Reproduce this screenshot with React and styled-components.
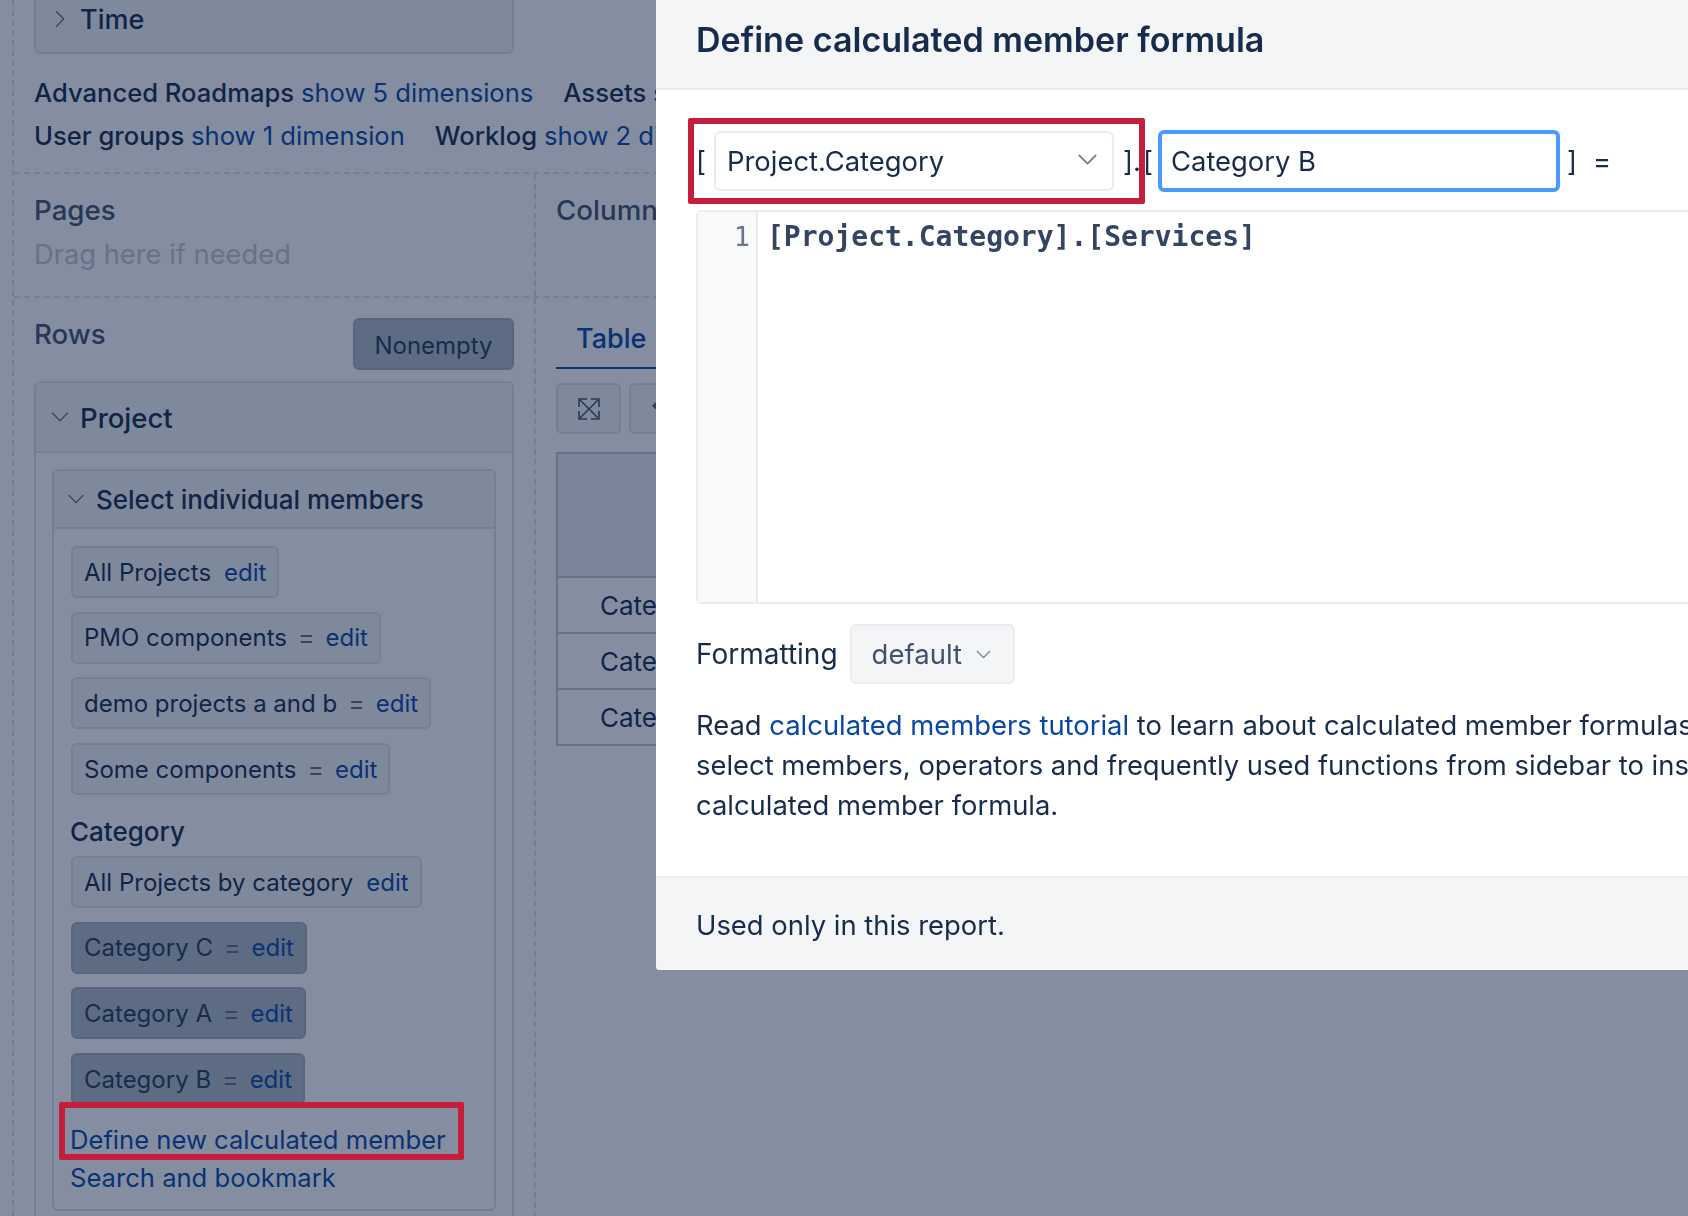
import React from "react";
import styled, { createGlobalStyle } from "styled-components";
import { ChevronDown, ChevronRight, Undo2 } from "lucide-react";

const GlobalStyle = createGlobalStyle`
    html, body {
        margin: 0;
        padding: 0;
        overflow: hidden;
        background: #fff;
    }
    * {
        box-sizing: border-box;
    }
`;

const Page = styled.div`
    position: relative;
    width: 1688px;
    height: 1216px;
    overflow: hidden;
    padding-left: 12px;
    font-family: Inter, "Liberation Sans", sans-serif;
    color: #172b4d;
`;

const Board = styled.div`
    border-left: 2px dashed #dfe1e6;
    height: 100%;
`;

const Link = styled.a`
    color: #0747a6;
    text-decoration: none;
`;

const TopSection = styled.section`
    height: 174px;
    padding-left: 20px;
    border-bottom: 2px dashed #dfe1e6;
`;

const TimeBox = styled.div`
    width: 480px;
    height: 54px;
    display: flex;
    align-items: flex-start;
    gap: 5px;
    padding: 3px 0 0 9px;
    background: #f4f5f7;
    border: 2px solid #dfe1e6;
    border-top: none;
    border-radius: 0 0 6px 6px;
    font-size: 27px;
    font-weight: 500;
    line-height: 34px;
    svg {
        margin-top: 1px;
        color: #6b778c;
    }
`;

const DimensionLines = styled.div`
    margin-top: 17px;
    font-size: 25.6px;
    line-height: 43px;
    font-weight: 500;
    white-space: nowrap;
`;

const DimensionName = styled.span`
    margin-right: 30px;
    ${Link} {
        font-weight: 400;
    }
`;

const Columns = styled.div`
    display: grid;
    grid-template-columns: 522px 1fr;
    height: ${(p) => p.$height}px;
    border-bottom: ${(p) => (p.$last ? "none" : "2px dashed #dfe1e6")};
`;

const Cell = styled.div`
    padding: ${(p) => p.$top || 0}px 0 0 20px;
    border-right: ${(p) => (p.$divided ? "2px dashed #dfe1e6" : "none")};
    overflow: hidden;
`;

const SectionLabel = styled.div`
    margin-top: ${(p) => p.$top || 0}px;
    font-size: 27.7px;
    line-height: 36px;
    font-weight: 500;
    color: #42526e;
`;

const DropHint = styled.div`
    margin-top: 9px;
    font-size: 27.3px;
    line-height: 36px;
    color: #c1c7d0;
`;

const RowsHead = styled.div`
    display: flex;
    justify-content: space-between;
    align-items: flex-start;
    width: 480px;
    height: 61px;
`;

const NonemptyButton = styled.div`
    width: 161px;
    height: 52px;
    margin-top: 20px;
    display: flex;
    align-items: center;
    justify-content: center;
    padding-top: 3px;
    background: #b3bac5;
    border: 2px solid #a5adba;
    border-radius: 6px;
    font-size: 24px;
    color: #253858;
`;

const Panel = styled.div`
    border: 2px solid #dfe1e6;
    border-radius: 6px;
    width: ${(p) => p.$width}px;
    margin-top: ${(p) => p.$top || 0}px;
`;

const PanelHead = styled.div`
    height: ${(p) => p.$height}px;
    display: flex;
    align-items: center;
    padding-left: ${(p) => p.$pad}px;
    gap: ${(p) => p.$gap}px;
    background: #f4f5f7;
    border-bottom: 2px solid #dfe1e6;
    font-size: ${(p) => p.$size}px;
    font-weight: 500;
    svg {
        color: #6b778c;
    }
`;

const HeadTitle = styled.span`
    padding-top: ${(p) => p.$nudge || 0}px;
`;

const PanelBody = styled.div`
    padding: 0 16px;
    height: ${(p) => p.$height}px;
`;

const MemberList = styled.div`
    display: flex;
    flex-direction: column;
    align-items: flex-start;
    gap: 13.7px;
    padding: ${(p) => p.$top}px 0 0 1px;
`;

const Chip = styled.div`
    height: 52px;
    display: flex;
    align-items: center;
    padding: 0 11px;
    gap: ${(p) => (p.$calc ? 11 : 13)}px;
    background: ${(p) => (p.$selected ? "#b3bac5" : "#f4f5f7")};
    border: 2px solid ${(p) => (p.$selected ? "#a5adba" : "#dfe1e6")};
    border-radius: 6px;
    font-size: 24px;
    white-space: nowrap;
    color: ${(p) => (p.$selected ? "#253858" : "#172b4d")};
`;

const Equals = styled.span`
    color: #5e6c84;
    font-size: 25px;
    line-height: 1;
`;

const GroupLabel = styled.div`
    margin-top: 21px;
    margin-bottom: 8px;
    font-size: 26px;
    line-height: 32px;
    font-weight: 500;
`;

const Actions = styled.div`
    display: flex;
    flex-direction: column;
    font-size: 25.6px;
    line-height: 38px;
    padding-top: 16px;
    white-space: nowrap;
`;

const RedFrame = styled.div`
    position: absolute;
    left: ${(p) => p.$left}px;
    top: ${(p) => p.$top}px;
    width: ${(p) => p.$width}px;
    height: ${(p) => p.$height}px;
    border: 6px solid #c41e3a;
    border-radius: 2px;
    pointer-events: none;
`;

const Tab = styled.div`
    width: 300px;
    height: 52px;
    margin-top: 19px;
    padding: 4px 0 0 20px;
    border-bottom: 2px solid #0747a6;
    color: #0747a6;
    font-size: 27px;
    font-weight: 500;
    line-height: 36px;
`;

const ToolRow = styled.div`
    display: flex;
    gap: 8px;
    margin-top: 14px;
`;

const ToolButton = styled.div`
    width: 65px;
    height: 51px;
    display: flex;
    align-items: center;
    justify-content: center;
    flex-shrink: 0;
    background: #f4f5f7;
    border: 2px solid #dfe1e6;
    border-radius: 6px;
    color: #42526e;
`;

const Pivot = styled.div`
    width: 300px;
    margin-top: 18px;
    border: 2px solid #c1c7d0;
    border-right: none;
`;

const PivotHead = styled.div`
    height: 122px;
    background: #ebecf0;
`;

const PivotRow = styled.div`
    height: 56px;
    padding-left: 42px;
    display: flex;
    align-items: center;
    border-top: 2px solid #c1c7d0;
    font-size: 26px;
`;

const Overlay = styled.div`
    position: fixed;
    inset: 0;
    background: rgba(9, 30, 66, 0.5);
`;

const Modal = styled.div`
    position: absolute;
    top: 0;
    left: 656px;
    width: 1300px;
    height: 970px;
    display: flex;
    flex-direction: column;
    background: #fff;
    border-radius: 0 0 0 4px;
    overflow: hidden;
    color: #172b4d;
`;

const ModalHeader = styled.header`
    height: 90px;
    flex-shrink: 0;
    display: flex;
    align-items: center;
    padding: 0 0 10px 40px;
    background: #f4f5f7;
    border-bottom: 2px solid #ebecf0;
    font-size: 34.1px;
    font-weight: 600;
`;

const ModalBody = styled.div`
    flex: 1;
    padding: 40px 0 0 40px;
`;

const FormulaRow = styled.div`
    position: relative;
    display: flex;
    align-items: center;
    height: 62px;
    font-size: 27.4px;
`;

const Bracket = styled.span`
    width: ${(p) => p.$width}px;
    padding-left: ${(p) => p.$pad || 0}px;
    flex-shrink: 0;
    color: #172b4d;
`;

const SelectBox = styled.div`
    width: 400px;
    height: 60px;
    margin-left: 1px;
    display: flex;
    align-items: center;
    justify-content: space-between;
    padding: 0 8px 0 11px;
    border: 2px solid #ebecf0;
    border-radius: 6px;
    svg {
        color: #6b778c;
        margin-top: -4px;
    }
`;

const NameInput = styled.div`
    width: 402px;
    height: 62px;
    margin-left: 1px;
    display: flex;
    align-items: center;
    padding-left: 9px;
    border: 4px solid #4c9aff;
    border-radius: 6px;
`;

const Editor = styled.div`
    display: flex;
    height: 394px;
    margin-top: 18px;
    border: 2px solid #ebecf0;
    border-right: none;
    border-radius: 6px 0 0 6px;
    font-family: "DejaVu Sans Mono", "Liberation Mono", monospace;
    font-size: 28px;
    line-height: 36px;
`;

const Gutter = styled.div`
    width: 60px;
    padding: 7px 6px 0 0;
    text-align: right;
    background: #f8f9fa;
    border-right: 2px solid #ebecf0;
    color: #6b778c;
    font-size: 27px;
`;

const Code = styled.div`
    padding: 7px 0 0 9px;
    font-weight: 700;
    color: #344563;
`;

const FormatRow = styled.div`
    display: flex;
    align-items: center;
    gap: 12px;
    margin-top: 20px;
    font-size: 28px;
`;

const FormatButton = styled.div`
    width: 165px;
    height: 60px;
    display: flex;
    align-items: center;
    gap: 9px;
    padding-left: 20px;
    background: #f4f5f7;
    border: 2px solid #ebecf0;
    border-radius: 6px;
    color: #42526e;
    font-size: 27.5px;
    svg {
        color: #6b778c;
    }
`;

const Help = styled.p`
    margin: 21px 0 0;
    font-size: 27.4px;
    line-height: 40px;
    white-space: nowrap;
`;

const ModalFooter = styled.footer`
    height: 94px;
    flex-shrink: 0;
    display: flex;
    align-items: center;
    padding: 2px 0 0 40px;
    background: #f4f5f7;
    border-top: 2px solid #ebecf0;
    font-size: 27.4px;
`;

function ExpandIcon() {
    return (
        <svg width="26" height="26" viewBox="0 0 26 26" fill="none" stroke="currentColor" strokeWidth="1.6">
            <path d="M4 4l18 18M22 4L4 22" />
            <path d="M3 11V3h8M23 11V3h-8M3 15v8h8M23 15v8h-8" />
        </svg>
    );
}

const dimensionRows = [
    [
        ["Advanced Roadmaps", "show 5 dimensions"],
        ["Assets", "show 2 dimensions"],
    ],
    [
        ["User groups", "show 1 dimension"],
        ["Worklog", "show 2 dimensions"],
    ],
];

const projectMembers = [
    { name: "All Projects" },
    { name: "PMO components", calc: true },
    { name: "demo projects a and b", calc: true },
    { name: "Some components", calc: true },
];

const categoryMembers = [
    { name: "All Projects by category" },
    { name: "Category C", calc: true, selected: true },
    { name: "Category A", calc: true, selected: true },
    { name: "Category B", calc: true, selected: true },
];

function Member({ name, calc, selected }) {
    return (
        <Chip $selected={selected} $calc={calc}>
            <span>{name}</span>
            {calc && <Equals>=</Equals>}
            <Link>edit</Link>
        </Chip>
    );
}

function App() {
    return (
        <Page>
            <GlobalStyle />
            <Board>
                <TopSection>
                    <TimeBox>
                        <ChevronRight size={30} strokeWidth={1.2} />
                        Time
                    </TimeBox>
                    <DimensionLines>
                        {dimensionRows.map((row, i) => (
                            <div key={i}>
                                {row.map(([name, link]) => (
                                    <DimensionName key={name}>
                                        {name} <Link>{link}</Link>
                                    </DimensionName>
                                ))}
                            </div>
                        ))}
                    </DimensionLines>
                </TopSection>

                <Columns $height={124}>
                    <Cell $divided $top={18}>
                        <SectionLabel>Pages</SectionLabel>
                        <DropHint>Drag here if needed</DropHint>
                    </Cell>
                    <Cell $top={18}>
                        <SectionLabel>Columns</SectionLabel>
                    </Cell>
                </Columns>

                <Columns $height={920} $last>
                    <Cell $divided>
                        <RowsHead>
                            <SectionLabel $top={18}>Rows</SectionLabel>
                            <NonemptyButton>Nonempty</NonemptyButton>
                        </RowsHead>
                        <Panel $width={480} $top={22}>
                            <PanelHead $height={70} $pad={9} $gap={5} $size={27.5}>
                                <ChevronDown size={30} strokeWidth={1.2} />
                                <HeadTitle $nudge={2}>Project</HeadTitle>
                            </PanelHead>
                            <PanelBody $height={760}>
                                <Panel $width={444} $top={16}>
                                    <PanelHead $height={58} $pad={8} $gap={6} $size={26}>
                                        <ChevronDown size={28} strokeWidth={1.2} />
                                        Select individual members
                                    </PanelHead>
                                    <PanelBody $height={680}>
                                        <MemberList $top={17}>
                                            {projectMembers.map((m) => (
                                                <Member key={m.name} {...m} />
                                            ))}
                                        </MemberList>
                                        <GroupLabel>Category</GroupLabel>
                                        <MemberList $top={0}>
                                            {categoryMembers.map((m) => (
                                                <Member key={m.name} {...m} />
                                            ))}
                                        </MemberList>
                                        <Actions>
                                            <Link>Define new calculated member</Link>
                                            <Link>Search and bookmark</Link>
                                        </Actions>
                                    </PanelBody>
                                </Panel>
                            </PanelBody>
                        </Panel>
                    </Cell>
                    <Cell>
                        <Tab>Table</Tab>
                        <ToolRow>
                            <ToolButton>
                                <ExpandIcon />
                            </ToolButton>
                            <ToolButton>
                                <Undo2 size={26} strokeWidth={1.6} />
                            </ToolButton>
                        </ToolRow>
                        <Pivot>
                            <PivotHead />
                            <PivotRow>Category C</PivotRow>
                            <PivotRow>Category A</PivotRow>
                            <PivotRow>Category B</PivotRow>
                        </Pivot>
                    </Cell>
                </Columns>
            </Board>

            <Overlay />
            <RedFrame $left={59} $top={1102} $width={405} $height={58} />

            <Modal>
                <ModalHeader>Define calculated member formula</ModalHeader>
                <ModalBody>
                    <FormulaRow>
                        <Bracket $width={17}>[</Bracket>
                        <SelectBox>
                            Project.Category
                            <ChevronDown size={33} strokeWidth={1.2} />
                        </SelectBox>
                        <Bracket $width={29} $pad={9}>].</Bracket>
                        <Bracket $width={14}>[</Bracket>
                        <NameInput>Category B</NameInput>
                        <Bracket $width={33} $pad={7}>]</Bracket>
                        <span>=</span>
                        <RedFrame $left={-8} $top={-12} $width={457} $height={86} />
                    </FormulaRow>
                    <Editor>
                        <Gutter>1</Gutter>
                        <Code>[Project.Category].[Services]</Code>
                    </Editor>
                    <FormatRow>
                        Formatting
                        <FormatButton>
                            default
                            <ChevronDown size={25} strokeWidth={1.3} />
                        </FormatButton>
                    </FormatRow>
                    <Help>
                        Read <Link>calculated members tutorial</Link> to learn about calculated member formulas.
                        <br />
                        select members, operators and frequently used functions from sidebar to insert
                        <br />
                        calculated member formula.
                    </Help>
                </ModalBody>
                <ModalFooter>Used only in this report.</ModalFooter>
            </Modal>
        </Page>
    );
}

export default App;
